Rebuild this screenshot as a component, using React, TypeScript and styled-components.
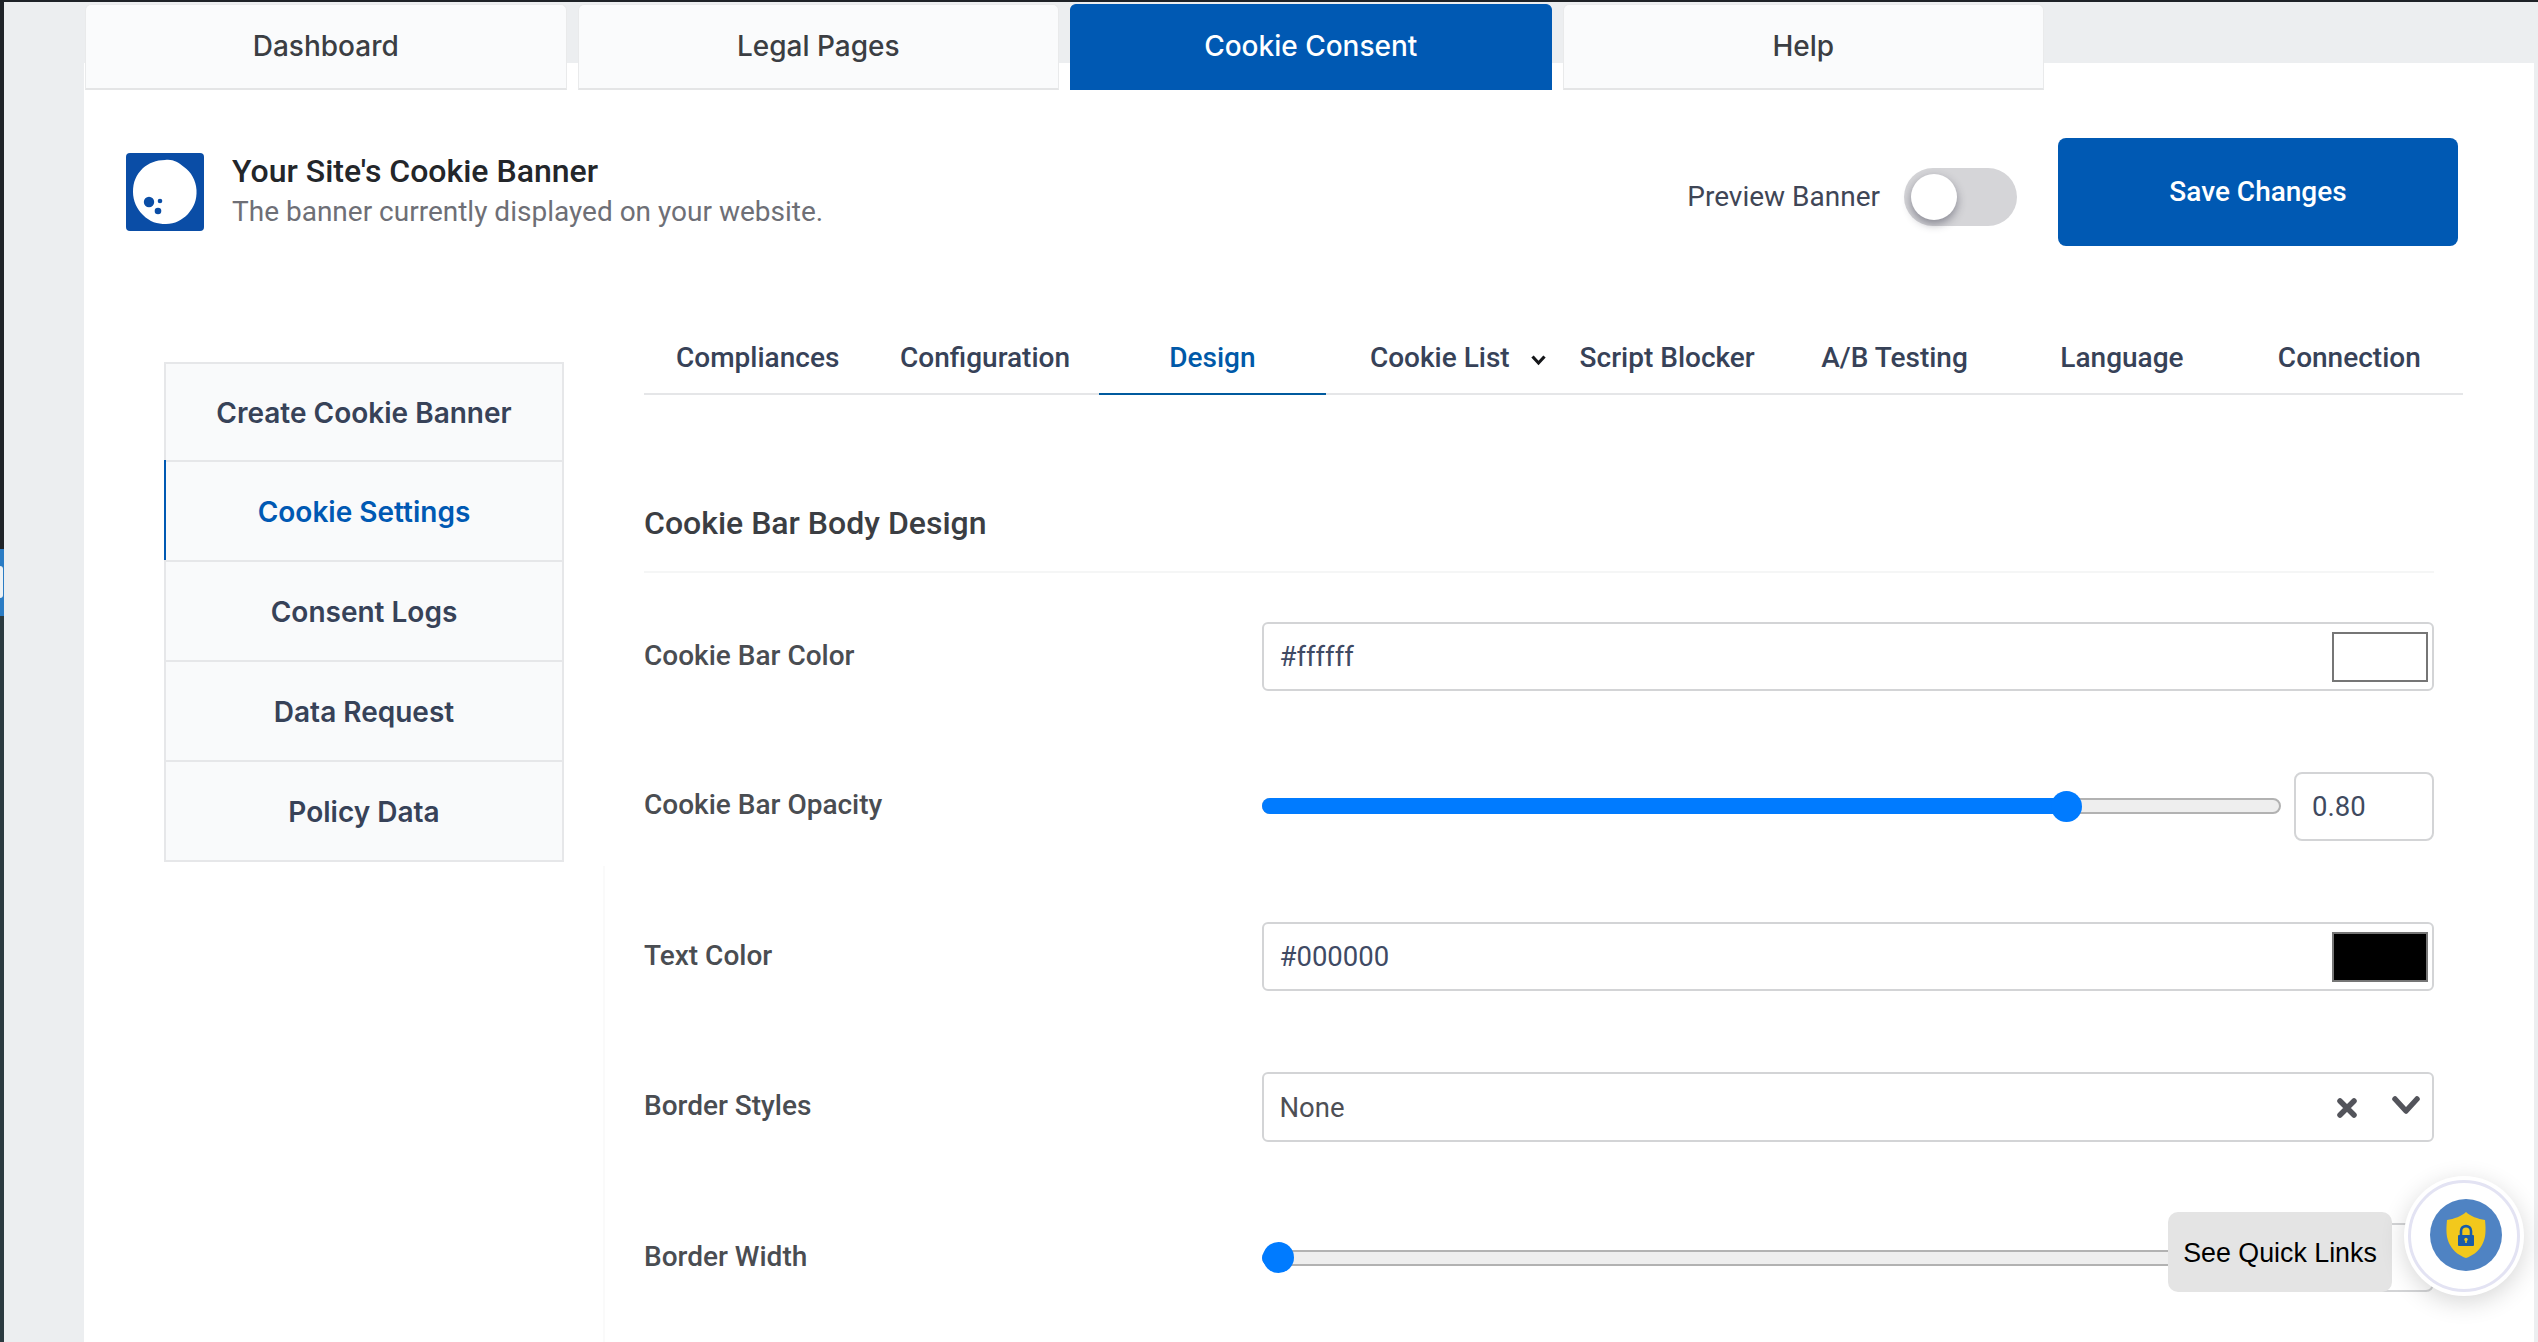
import React from "react";
import styled, { createGlobalStyle } from "styled-components";

const Global = createGlobalStyle`
  * { box-sizing: border-box; }
  html, body { margin: 0; padding: 0; background: #eceef0; }
  body { font-family: Inter, "Liberation Sans", sans-serif; overflow: hidden; }
`;

const Page = styled.div`
  position: relative;
  display: flex;
  width: 2538px;
  height: 1342px;
  overflow: hidden;
  background: #eceef0;
`;

const EdgeStrip = styled.div`
  display: flex;
  flex-direction: column;
  width: 4px;
  height: 100%;
  flex: none;
`;

const EdgeDark = styled.div<{ $h?: number; $tone: string }>`
  height: ${(p) => (p.$h ? `${p.$h}px` : "auto")};
  flex: ${(p) => (p.$h ? "none" : "1")};
  background: ${(p) => p.$tone};
`;

const EdgeBlue = styled.div`
  height: 67px;
  padding-top: 17px;
  background: #2b7cc4;
`;

const EdgeNotch = styled.div`
  width: 3px;
  height: 32px;
  background: #eef2f5;
  border-radius: 0 14px 14px 0;
`;

const Column = styled.div`
  flex: 1;
  display: flex;
  flex-direction: column;
  min-width: 0;
`;

const TopBar = styled.div`
  height: 2px;
  flex: none;
  margin-left: -4px;
  background: #1e2227;
`;

const Shell = styled.div`
  flex: 1;
  margin: 0 4px 0 80px;
  display: flex;
  flex-direction: column;
`;

const TabStrip = styled.div`
  display: grid;
  grid-template-columns: repeat(4, 481.5px);
  column-gap: 11px;
  height: 88px;
  padding: 2px 0 0 1px;
  background: linear-gradient(#eceef0 61px, #ffffff 61px);
`;

const TopTab = styled.div<{ $active?: boolean }>`
  display: flex;
  align-items: center;
  justify-content: center;
  padding-bottom: 2px;
  font-size: 28px;
  font-weight: 500;
  color: ${(p) => (p.$active ? "#ffffff" : "#3b3e43")};
  background: ${(p) => (p.$active ? "#0059b3" : "#fafbfc")};
  border: solid ${(p) => (p.$active ? "#0059b3" : "#e9eaeb")};
  border-width: 1px 1px 2px 1px;
  border-bottom-color: ${(p) => (p.$active ? "#0059b3" : "#e4e5e6")};
  border-radius: 6px 6px 0 0;
`;

const Panel = styled.div`
  flex: 1;
  display: flex;
  flex-direction: column;
  background: #ffffff;
`;

const Header = styled.div`
  display: flex;
  align-items: center;
  height: 108px;
  margin-top: 48px;
  padding: 0 76px 0 42px;
  font-family: Roboto, "Liberation Sans", sans-serif;
`;

const LogoBox = styled.svg`
  width: 78px;
  height: 78px;
  flex: none;
  display: block;
`;

const TitleBlock = styled.div`
  margin-left: 28px;
  display: flex;
  flex-direction: column;
  gap: 5px;
  margin-top: -2px;
`;

const Title = styled.div`
  font-size: 32px;
  font-weight: 500;
  line-height: 36px;
  color: #23262a;
`;

const Subtitle = styled.div`
  font-size: 28px;
  font-weight: 400;
  line-height: 36px;
  color: #6e6f76;
`;

const HeaderRight = styled.div`
  margin-left: auto;
  display: flex;
  align-items: center;
`;

const PreviewLabel = styled.div`
  font-size: 28px;
  color: #3f4656;
  margin-top: 9px;
`;

const Toggle = styled.div`
  width: 113px;
  height: 58px;
  margin: 10px 41px 0 24px;
  padding: 6px 0 0 7px;
  background: #d5d5d8;
  border-radius: 29px;
`;

const Knob = styled.div`
  width: 46px;
  height: 46px;
  border-radius: 50%;
  background: #ffffff;
  box-shadow: 0 4px 10px rgba(40, 40, 60, 0.45);
`;

const SaveButton = styled.div`
  display: flex;
  align-items: center;
  justify-content: center;
  width: 400px;
  height: 108px;
  padding-bottom: 2px;
  border-radius: 8px;
  background: #0059b3;
  color: #ffffff;
  font-size: 28px;
  font-weight: 500;
`;

const Body = styled.div`
  flex: 1;
  display: flex;
  padding-left: 80px;
`;

const SideColumn = styled.div`
  width: 480px;
  flex: none;
  display: flex;
  flex-direction: column;
  padding-top: 116px;
`;

const Sidebar = styled.div`
  width: 400px;
  display: flex;
  flex-direction: column;
  border: 2px solid #e6e7e9;
  background: #f9fafb;
`;

const SideRule = styled.div`
  flex: 1;
  width: 2px;
  margin: 4px 0 0 439px;
  background: #fafafa;
`;

const SideItem = styled.div<{ $active?: boolean }>`
  display: flex;
  align-items: center;
  justify-content: center;
  height: 100px;
  font-size: 28px;
  font-weight: 600;
  padding-top: 1px;
  color: ${(p) => (p.$active ? "#0059b3" : "#374258")};
  & + & { border-top: 2px solid #e6e7e9; }
  &:first-child { height: 96px; }
  ${(p) => (p.$active ? "box-shadow: -2px 0 0 #0059b3;" : "")}
`;

const Main = styled.div`
  width: 1819px;
  flex: none;
  margin-top: 74px;
  font-family: Roboto, "Liberation Sans", sans-serif;
`;

const SubTabs = styled.div`
  display: grid;
  grid-template-columns: repeat(8, 1fr);
  height: 75px;
  border-bottom: 2px solid #e5e6e8;
`;

const SubTab = styled.div<{ $active?: boolean }>`
  position: relative;
  display: flex;
  align-items: center;
  justify-content: center;
  height: 75px;
  padding-top: 2px;
  font-size: 28px;
  font-weight: 500;
  color: ${(p) => (p.$active ? "#0059a8" : "#374258")};
  border-bottom: 2px solid ${(p) => (p.$active ? "#005a9e" : "transparent")};
`;

const TabCaret = styled.svg`
  position: absolute;
  right: 7px;
  top: 34px;
  display: block;
`;

const FormArea = styled.div`
  width: 1790px;
`;

const SectionTitle = styled.div`
  margin-top: 101px;
  height: 77px;
  line-height: 54px;
  font-size: 32px;
  font-weight: 500;
  color: #3b3e43;
  border-bottom: 2px solid #f5f6f6;
`;

const Rows = styled.div`
  display: flex;
  flex-direction: column;
  margin-top: 49px;
`;

const Row = styled.div<{ $after: number; $h?: number }>`
  display: grid;
  grid-template-columns: 617.5px 1172.5px;
  align-items: center;
  height: ${(p) => p.$h ?? 69}px;
  margin-bottom: ${(p) => p.$after}px;
`;

const Label = styled.div`
  font-size: 28px;
  font-weight: 500;
  color: #4a4d52;
  margin-top: -3px;
`;

const Field = styled.div<{ $h?: number; $tone?: string }>`
  display: flex;
  align-items: center;
  height: ${(p) => p.$h ?? 69}px;
  padding: 0 4px 0 16px;
  border: 2px solid #d3d4d6;
  border-radius: 6px;
  background: #ffffff;
  font-size: 27.500px;
  color: ${(p) => p.$tone ?? "#3f4a64"};
`;

const FieldValue = styled.div`
  flex: 1;
`;

const Swatch = styled.div<{ $color: string }>`
  width: 96px;
  height: 50px;
  border: 2px solid #767676;
  background: ${(p) => p.$color};
`;

const SliderRow = styled.div`
  display: flex;
  align-items: center;
  gap: 13px;
  height: 69px;
`;

const Track = styled.div`
  position: relative;
  width: 1019.5px;
  height: 16px;
  flex: none;
  border: 2px solid #b2b2b2;
  border-radius: 8px;
  background: #eeeeee;
`;

const TrackFill = styled.div`
  position: absolute;
  left: -2px;
  top: -2px;
  bottom: -2px;
  border-radius: 8px 0 0 8px;
  background: #007bff;
`;

const Thumb = styled.div`
  position: absolute;
  top: 50%;
  width: 31px;
  height: 31px;
  margin: -15.5px 0 0 -15.5px;
  border-radius: 50%;
  background: #007bff;
`;

const NumberBox = styled.div`
  width: 140px;
  height: 69px;
  flex: none;
  display: flex;
  align-items: center;
  padding-left: 16px;
  border: 2px solid #d3d4d6;
  border-radius: 8px;
  font-size: 27.500px;
  color: #3f4a5f;
`;

const IconSlot = styled.svg<{ $ml?: number; $mr?: number; $mt?: number }>`
  display: block;
  flex: none;
  margin: ${(p) => p.$mt ?? 0}px ${(p) => p.$mr ?? 0}px 0 ${(p) => p.$ml ?? 0}px;
`;

const QuickLinks = styled.div`
  position: absolute;
  left: 2168px;
  top: 1212px;
  width: 224px;
  height: 80px;
  display: flex;
  align-items: center;
  justify-content: center;
  padding-top: 2px;
  border-radius: 10px;
  background: #e4e4e4;
  color: #000000;
  font-family: "Liberation Sans", Arial, sans-serif;
  font-size: 26.8px;
`;

const FloatButton = styled.div`
  position: absolute;
  left: 2404px;
  top: 1176px;
  width: 120px;
  height: 120px;
  display: flex;
  align-items: center;
  justify-content: center;
  border-radius: 50%;
  background: #ffffff;
  box-shadow: 0 6px 24px rgba(0, 0, 0, 0.16);
  &::before {
    content: "";
    position: absolute;
    inset: 4px;
    border: 3px solid #e3e3f3;
    border-radius: 50%;
  }
`;

const FloatDisc = styled.div`
  width: 72px;
  height: 72px;
  margin: 0 0 2px 4px;
  display: flex;
  align-items: center;
  justify-content: center;
  border-radius: 50%;
  background: #4f83c3;
`;

const topTabs = ["Dashboard", "Legal Pages", "Cookie Consent", "Help"];
const sideItems = ["Create Cookie Banner", "Cookie Settings", "Consent Logs", "Data Request", "Policy Data"];
const subTabs = ["Compliances", "Configuration", "Design", "Cookie List", "Script Blocker", "A/B Testing", "Language", "Connection"];

function Slider({ at, value }: { at: number; value: string }) {
  return (
    <SliderRow>
      <Track>
        <TrackFill style={{ width: at }} />
        <Thumb style={{ left: at - 2 }} />
      </Track>
      <NumberBox>{value}</NumberBox>
    </SliderRow>
  );
}

export default function App() {
  return (
    <Page>
      <Global />
      <EdgeStrip>
        <EdgeDark $h={549} $tone="#1f2328" />
        <EdgeBlue>
          <EdgeNotch />
        </EdgeBlue>
        <EdgeDark $tone="#2b3a40" />
      </EdgeStrip>
      <Column>
        <TopBar />
        <Shell>
          <TabStrip>
            {topTabs.map((t) => (
              <TopTab key={t} $active={t === "Cookie Consent"}>{t}</TopTab>
            ))}
          </TabStrip>
          <Panel>
            <Header>
              <LogoBox viewBox="0 0 78 78">
                <rect width="78" height="78" rx="4" fill="#0a4da6" />
                <path
                  d="M39 7 C47 6 52 9 58 14 C65 19 70 27 70.500 37 C71 47 68 54 62 61 C56 67 49 71 40 71 C31 71 24 69 17 62 C11 56 7 48 7 39 C7 29 10 22 17 15 C23 10 30 7 39 7 Z"
                  fill="#ffffff"
                />
                <circle cx="23" cy="49" r="5.200" fill="#0a4da6" />
                <circle cx="34" cy="48" r="2.300" fill="#0a4da6" />
                <circle cx="32" cy="58" r="3.300" fill="#0a4da6" />
              </LogoBox>
              <TitleBlock>
                <Title>Your Site's Cookie Banner</Title>
                <Subtitle>The banner currently displayed on your website.</Subtitle>
              </TitleBlock>
              <HeaderRight>
                <PreviewLabel>Preview Banner</PreviewLabel>
                <Toggle>
                  <Knob />
                </Toggle>
                <SaveButton>Save Changes</SaveButton>
              </HeaderRight>
            </Header>
            <Body>
              <SideColumn>
                <Sidebar>
                  {sideItems.map((s) => (
                    <SideItem key={s} $active={s === "Cookie Settings"}>{s}</SideItem>
                  ))}
                </Sidebar>
                <SideRule />
              </SideColumn>
              <Main>
                <SubTabs>
                  {subTabs.map((s) => (
                    <SubTab key={s} $active={s === "Design"}>
                      {s}
                      {s === "Cookie List" && (
                        <TabCaret width="17" height="12" viewBox="0 0 17 12">
                          <path d="M2.500 2.500 L8.500 9 L14.500 2.500" fill="none" stroke="#15171a" strokeWidth="3.200" />
                        </TabCaret>
                      )}
                    </SubTab>
                  ))}
                </SubTabs>
                <FormArea>
                  <SectionTitle>Cookie Bar Body Design</SectionTitle>
                  <Rows>
                    <Row $after={80}>
                      <Label>Cookie Bar Color</Label>
                      <Field>
                        <FieldValue>#ffffff</FieldValue>
                        <Swatch $color="#ffffff" />
                      </Field>
                    </Row>
                    <Row $after={81} $h={70}>
                      <Label>Cookie Bar Opacity</Label>
                      <Slider at={805} value="0.80" />
                    </Row>
                    <Row $after={81}>
                      <Label>Text Color</Label>
                      <Field>
                        <FieldValue>#000000</FieldValue>
                        <Swatch $color="#000000" />
                      </Field>
                    </Row>
                    <Row $after={81} $h={70}>
                      <Label>Border Styles</Label>
                      <Field $h={70} $tone="#4e4f55">
                        <FieldValue>None</FieldValue>
                        <IconSlot width="22" height="22" viewBox="0 0 22 22" $mt={2}>
                          <path d="M4 4 L18 18 M18 4 L4 18" fill="none" stroke="#53545b" strokeWidth="5.500" strokeLinecap="round" />
                        </IconSlot>
                        <IconSlot $ml={33} $mr={7} $mt={-3} width="30" height="24" viewBox="0 0 30 24">
                          <path d="M4 5 L15 17 L26 5" fill="none" stroke="#53545b" strokeWidth="5.500" strokeLinecap="round" strokeLinejoin="round" />
                        </IconSlot>
                      </Field>
                    </Row>
                    <Row $after={0}>
                      <Label>Border Width</Label>
                      <Slider at={17} value="" />
                    </Row>
                  </Rows>
                </FormArea>
              </Main>
            </Body>
          </Panel>
        </Shell>
      </Column>
      <QuickLinks>See Quick Links</QuickLinks>
      <FloatButton>
        <FloatDisc>
          <svg width="40" height="46" viewBox="0 0 40 46">
            <path d="M20 0 C24 4 32 7 39 8 C40 18 40 26 36 33 C32 40 26 44 20 46 C14 44 8 40 4 33 C0 26 0 18 1 8 C8 7 16 4 20 0 Z" fill="#f2c81c" />
            <rect x="12" y="23" width="16" height="11" rx="1" fill="#1a5ca8" />
            <path d="M15 23 L15 19 C15 12.500 25 12.500 25 19 L25 23" fill="none" stroke="#1a5ca8" strokeWidth="2.600" />
            <circle cx="20" cy="27.500" r="1.700" fill="#f2c81c" />
            <rect x="19.200" y="27.500" width="1.600" height="3.500" fill="#f2c81c" />
          </svg>
        </FloatDisc>
      </FloatButton>
    </Page>
  );
}
